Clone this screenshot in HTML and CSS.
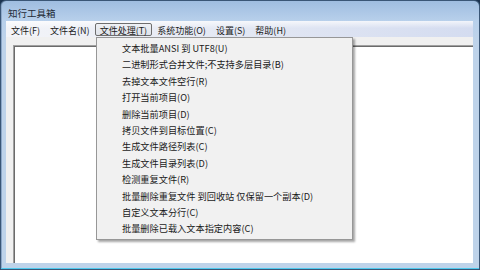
FILE: index.html
```html
<!DOCTYPE html>
<html>
<head>
<meta charset="utf-8">
<link rel="stylesheet" href="styles.css">
</head>
<body>
<div class="window">
  <div class="titlebar">知行工具箱</div>
  <div class="client">
    <div class="menubar">
      <span class="mitem">文件(F)</span>
      <span class="mitem">文件名(N)</span>
      <span class="mitem active">文件处理(T)</span>
      <span class="mitem">系统功能(O)</span>
      <span class="mitem">设置(S)</span>
      <span class="mitem">帮助(H)</span>
    </div>
    <div class="workspace">
      <div class="editbox"></div>
    </div>
  </div>
  <div class="dropdown">
    <div class="ditem">文本批量ANSI 到 UTF8(U)</div>
    <div class="ditem">二进制形式合并文件;不支持多层目录(B)</div>
    <div class="ditem">去掉文本文件空行(R)</div>
    <div class="ditem">打开当前项目(O)</div>
    <div class="ditem">删除当前项目(D)</div>
    <div class="ditem">拷贝文件到目标位置(C)</div>
    <div class="ditem">生成文件路径列表(C)</div>
    <div class="ditem">生成文件目录列表(D)</div>
    <div class="ditem">检测重复文件(R)</div>
    <div class="ditem">批量删除重复文件 到回收站 仅保留一个副本(D)</div>
    <div class="ditem">自定义文本分行(C)</div>
    <div class="ditem">批量删除已载入文本指定内容(C)</div>
  </div>
</div>
</body>
</html>
```

FILE: styles.css
```css
html, body {
  margin: 0;
  padding: 0;
  width: 480px;
  height: 270px;
  overflow: hidden;
  background: #1b3350;
}
body {
  font-family: "Noto Sans CJK SC", "Noto Sans", sans-serif;
  color: #1a1a1a;
}
.window {
  position: relative;
  box-sizing: border-box;
  width: 480px;
  height: 270px;
  border: 1px solid #3a5676;
  border-radius: 6px 6px 0 0;
  background: linear-gradient(#9fbde0 0px, #b8d0eb 20px, #bed3ea 40px, #bed3ea);
  box-shadow: inset 0 -1px 0 #4ec9ee, inset 1px 0 0 #8ca7c8;
  padding: 0 6px 6px 5px;
  display: flex;
  flex-direction: column;
}
.titlebar {
  height: 20px;
  line-height: 24px;
  padding-left: 2px;
  font-size: 9.5px;
  color: #1e2a36;
}
.client {
  flex: 1;
  display: flex;
  flex-direction: column;
}
.menubar {
  height: 16px;
  display: flex;
  align-items: center;
  background:
    linear-gradient(rgba(255,255,255,0.7), rgba(255,255,255,0) 45%),
    linear-gradient(to right, #f3f4f8, #e6eaf4 40%, #d4dcf0);
  font-size: 9px;
}
.mitem {
  box-sizing: border-box;
  height: 13px;
  line-height: 13px;
  padding: 0 4px;
  border: 1px solid transparent;
  border-radius: 2px;
  white-space: nowrap;
}
.mitem.active {
  border-color: #6e6e6e;
  background: linear-gradient(#eef0f4, #dfe3ea);
}
.workspace {
  flex: 1;
  display: flex;
  background: #f0f0f0;
  padding: 8px 0 0 7px;
}
.editbox {
  flex: 1;
  background: #fff;
  border-top: 1px solid #a0a0a0;
  border-left: 1px solid #a0a0a0;
  box-shadow: inset 1px 1px 0 #6b6b6b;
}
.dropdown {
  position: absolute;
  left: 95px;
  top: 36px;
  width: 257px;
  box-sizing: border-box;
  background: #f1f1f1;
  border: 1px solid #979797;
  padding: 2px 0;
  box-shadow: 2px 2px 2px rgba(0,0,0,0.35);
  font-size: 9.2px;
}
.ditem {
  height: 16.4px;
  line-height: 16.4px;
  padding-left: 25px;
  white-space: nowrap;
}
```
